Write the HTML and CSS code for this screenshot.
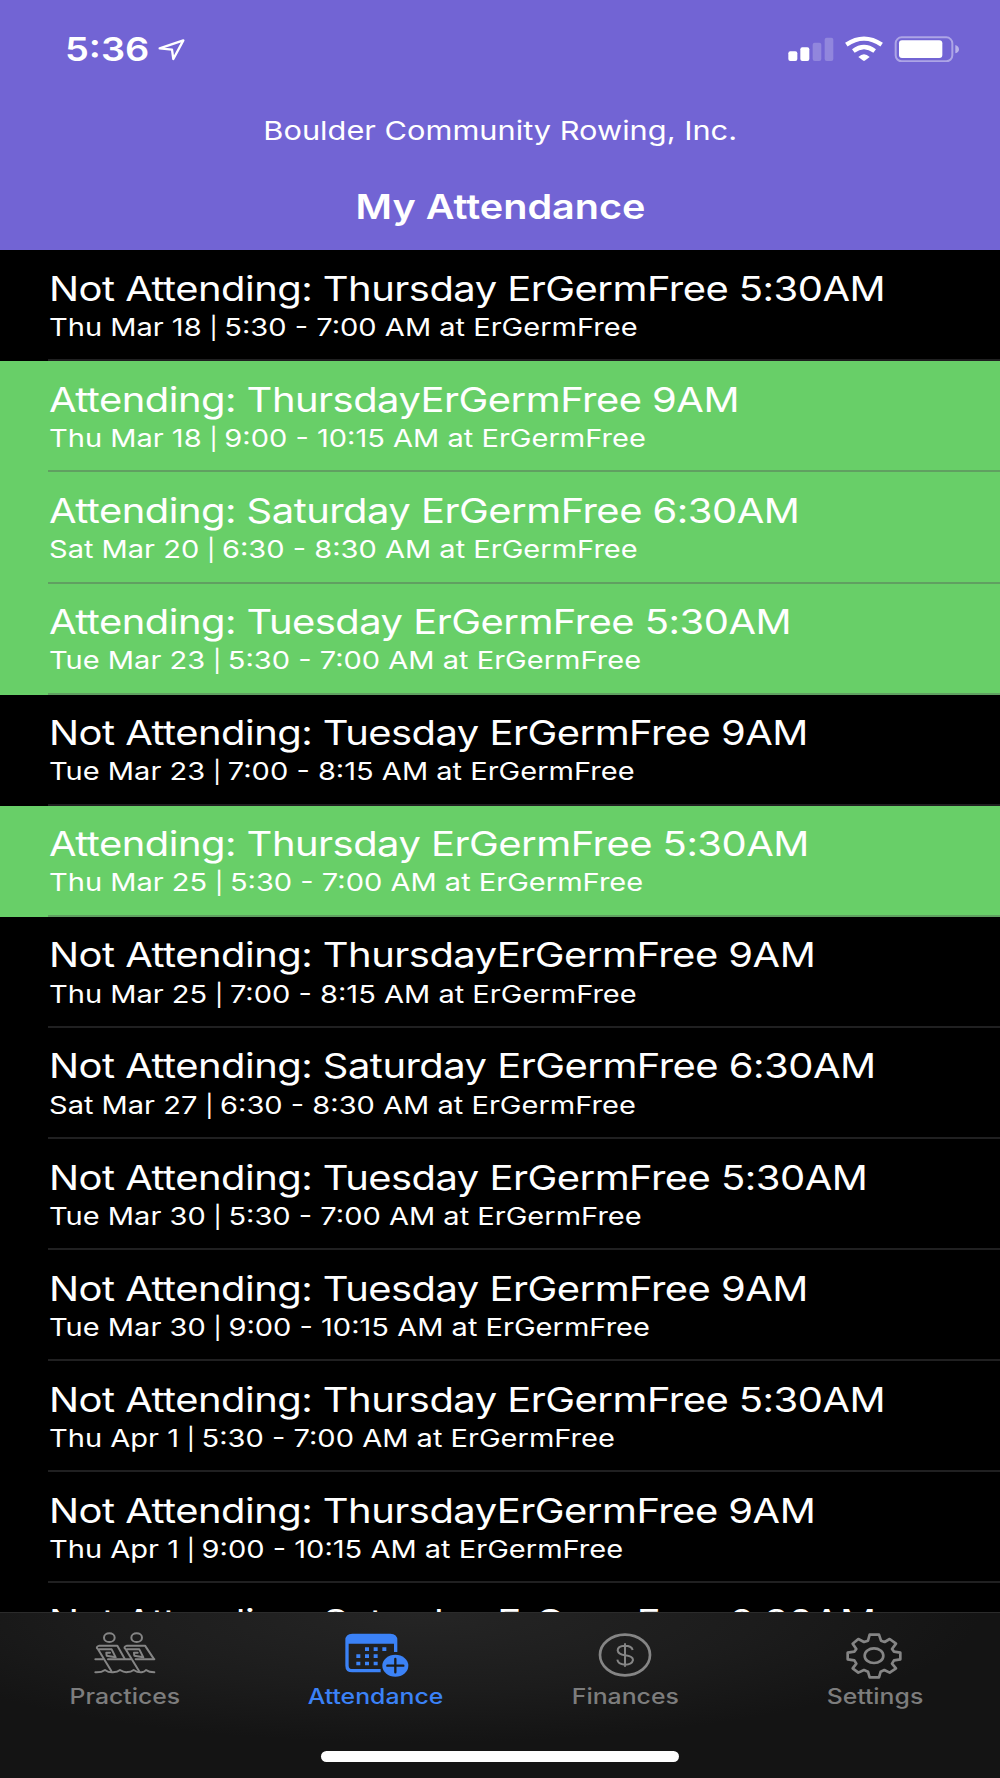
FILE: index.html
```html
<!doctype html>
<html>
<head>
<meta charset="UTF-8">
<title>My Attendance</title>
<link rel="stylesheet" href="styles.css">
</head>
<body>
	<div class="header">
		<div class="status">
			<div class="clock">
				<span class="time">5:36</span>
				<svg class="arrow" width="27" height="22" viewBox="473 117 81 66"><path d="M478 145L549 121L519 177L515 149Z" fill="none" stroke="#fff" stroke-width="7" stroke-linejoin="round"/></svg>
			</div>
			<svg class="signals" width="172" height="26" viewBox="864 108 516 78">
				<g fill="#fff">
					<rect x="865" y="154" width="27" height="29" rx="6"/>
					<rect x="901" y="142" width="27" height="41" rx="6"/>
					<rect x="938" y="128" width="26" height="55" rx="6" opacity=".22"/>
					<rect x="974" y="113" width="26" height="70" rx="6" opacity=".22"/>
					<path d="M1075 171Q1092 155 1109 171L1096 181Q1092 184 1088 181Z"/>
					<rect x="1197" y="121" width="130" height="53" rx="9"/>
					<path d="M1366 135Q1377 139 1377 148T1366 160Z" opacity=".5"/>
				</g>
				<path d="M1039 134Q1092 98 1145 134M1060 153Q1092 129 1124 153" fill="none" stroke="#fff" stroke-width="13"/>
				<rect x="1187" y="112" width="170" height="72" rx="18" fill="none" stroke="#fff" stroke-width="6" opacity=".42"/>
			</svg>
		</div>
		<p class="club"><span>Boulder Community Rowing, Inc.</span></p>
		<h1><span>My Attendance</span></h1>
	</div>
	<ul class="list">
		<li><div class="cell"><strong>Not Attending: Thursday ErGermFree 5:30AM</strong><em>Thu Mar 18 <i>|</i> 5:30 - 7:00 AM at ErGermFree</em></div></li>
		<li class="on"><div class="cell"><strong>Attending: ThursdayErGermFree 9AM</strong><em>Thu Mar 18 <i>|</i> 9:00 - 10:15 AM at ErGermFree</em></div></li>
		<li class="on"><div class="cell"><strong>Attending: Saturday ErGermFree 6:30AM</strong><em>Sat Mar 20 <i>|</i> 6:30 - 8:30 AM at ErGermFree</em></div></li>
		<li class="on"><div class="cell"><strong>Attending: Tuesday ErGermFree 5:30AM</strong><em>Tue Mar 23 <i>|</i> 5:30 - 7:00 AM at ErGermFree</em></div></li>
		<li><div class="cell"><strong>Not Attending: Tuesday ErGermFree 9AM</strong><em>Tue Mar 23 <i>|</i> 7:00 - 8:15 AM at ErGermFree</em></div></li>
		<li class="on"><div class="cell"><strong>Attending: Thursday ErGermFree 5:30AM</strong><em>Thu Mar 25 <i>|</i> 5:30 - 7:00 AM at ErGermFree</em></div></li>
		<li><div class="cell"><strong>Not Attending: ThursdayErGermFree 9AM</strong><em>Thu Mar 25 <i>|</i> 7:00 - 8:15 AM at ErGermFree</em></div></li>
		<li><div class="cell"><strong>Not Attending: Saturday ErGermFree 6:30AM</strong><em>Sat Mar 27 <i>|</i> 6:30 - 8:30 AM at ErGermFree</em></div></li>
		<li><div class="cell"><strong>Not Attending: Tuesday ErGermFree 5:30AM</strong><em>Tue Mar 30 <i>|</i> 5:30 - 7:00 AM at ErGermFree</em></div></li>
		<li><div class="cell"><strong>Not Attending: Tuesday ErGermFree 9AM</strong><em>Tue Mar 30 <i>|</i> 9:00 - 10:15 AM at ErGermFree</em></div></li>
		<li><div class="cell"><strong>Not Attending: Thursday ErGermFree 5:30AM</strong><em>Thu Apr 1 <i>|</i> 5:30 - 7:00 AM at ErGermFree</em></div></li>
		<li><div class="cell"><strong>Not Attending: ThursdayErGermFree 9AM</strong><em>Thu Apr 1 <i>|</i> 9:00 - 10:15 AM at ErGermFree</em></div></li>
		<li><div class="cell"><strong>Not Attending: Saturday ErGermFree 6:30AM</strong></div></li>
	</ul>
	<div class="tabbar">
		<ul class="tabs">
			<li>
				<svg width="64" height="48" viewBox="278 184 192 144" fill="none" stroke="#858585" stroke-width="6" stroke-linejoin="round" stroke-linecap="round">
					<ellipse cx="327" cy="204" rx="16" ry="13"/>
					<ellipse cx="409" cy="204" rx="16" ry="13"/>
					<path d="M373 267L351 228H297Q284 232 293 239L333 304M297 239H334L346 263L319 258L318 249H329"/>
					<path d="M460 267L434 228H380Q367 232 376 239L416 304M380 239H417L429 263L402 258L401 249H412"/>
					<path d="M285 269H308M323 269H391M406 269H462"/>
					<path d="M285 308Q303 309 314 301Q325 309 338 308Q352 307 359 301Q372 309 382 307Q391 307 400 301Q412 309 424 308Q433 306 437 301Q446 308 462 308"/>
				</svg>
				<span>Practices</span>
			</li>
			<li class="cur">
				<svg width="68" height="48" viewBox="1026 184 204 144">
					<path d="M1145 303H1060Q1044 303 1044 288V212Q1044 197 1060 197H1174Q1190 197 1190 212V247" fill="none" stroke="#3b82f7" stroke-width="10"/>
					<path d="M1044 222V210Q1046 196 1060 196H1174Q1190 198 1190 222Z" fill="#3b82f7"/>
					<path d="M1104 233V244M1130 233V244M1156 233V244M1078 254V265M1104 254V265M1130 254V265M1078 276V287M1104 276V287M1130 276V287" stroke="#3b82f7" stroke-width="12"/>
					<ellipse cx="1189" cy="288" rx="39" ry="33" fill="#3b82f7"/>
					<path d="M1165 288H1213M1189 268V308" stroke="#1b1b1b" stroke-width="7" stroke-linecap="round"/>
				</svg>
				<span>Attendance</span>
			</li>
			<li>
				<svg width="64" height="48" viewBox="279 184 192 144" fill="none" stroke="#858585">
					<ellipse cx="375" cy="256" rx="75" ry="61" stroke-width="8"/>
					<path d="M398 241Q395 228 375 228Q353 229 353 242Q354 253 375 257Q399 260 399 271Q396 285 375 285Q354 284 352 270M375 221V291" stroke-width="6"/>
				</svg>
				<span>Finances</span>
			</li>
			<li>
				<svg width="64" height="48" viewBox="1028 184 192 144" fill="none" stroke="#858585" stroke-width="8" stroke-linejoin="round">
					<path d="M1108 195H1136L1142 213L1153 217L1168 208L1187 222L1175 238L1181 246L1200 249V269L1181 272L1175 282L1187 296L1168 309L1152 301L1141 306L1136 323H1108L1103 306L1091 301L1074 309L1057 296L1068 282L1062 272L1042 269V249L1062 246L1068 238L1057 222L1074 208L1091 217L1103 213Z"/>
					<ellipse cx="1121" cy="258" rx="28" ry="22"/>
				</svg>
				<span>Settings</span>
			</li>
		</ul>
		<div class="home"></div>
	</div>
</body>
</html>
```
FILE: styles.css
```css
*{margin:0;padding:0;box-sizing:border-box;}
body{width:1000px;height:1778px;overflow:hidden;background:#000;color:#fff;font-family:Inter,"Liberation Sans",sans-serif;display:flex;flex-direction:column;}
ul,li{list-style:none;}
svg{display:block;}
/*header start*/
.header{height:250.3px;flex:none;background:#7264d4;text-align:center;}
.status{height:99px;padding:0 40px 0 65px;display:flex;justify-content:space-between;}
.clock{display:flex;}
.time{width:93px;margin-top:29px;font-size:33px;line-height:40px;font-weight:600;text-align:left;white-space:nowrap;transform:scaleX(1.15);transform-origin:left;}
.arrow{margin-top:39px;}
.signals{margin-top:36px;}
.club{height:62px;padding-top:14.5px;font-size:26px;line-height:34px;}
.club span{display:inline-block;transform:scaleX(1.183);}
h1{height:89px;padding:25px 0 0 2px;font-size:34px;line-height:42px;font-weight:600;}
h1 span{display:inline-block;transform:scaleX(1.164);}
/*header end*/
/*list start*/
.list{height:1362.2px;flex:none;overflow:hidden;}
.list li{height:111.1px;padding-left:48px;}
.list li.on{background:#68cf68;}
.cell{height:100%;padding-top:16.5px;border-bottom:2px solid rgba(84,84,88,.38);}
.cell strong,.cell em{display:block;width:760px;font-style:normal;font-weight:400;white-space:nowrap;transform-origin:left;}
.cell strong{margin-left:1px;font-size:34px;line-height:44px;letter-spacing:-.45px;transform:scaleX(1.175);}
.cell em{margin-top:.2px;margin-left:.5px;font-size:24.5px;line-height:32px;transform:scaleX(1.185);}
.cell i{margin:0 -1.5px 0 -.5px;font-size:22px;font-style:normal;}
/*list end*/
/*tabbar start*/
.tabbar{flex:1;border-top:1px solid #2b2b2b;background:radial-gradient(ellipse 560px 130px at 42% 0,#252525 0,#1c1c1c 60%,#141414 100%);}
.tabs{height:138px;padding-top:18px;display:flex;}
.tabs li{width:250px;display:flex;flex-direction:column;align-items:center;color:#7d7d7d;}
.tabs span{margin-top:4.5px;font-size:21px;line-height:26px;font-weight:500;transform:scaleX(1.18);}
.tabs li.cur{color:#3b82f7;}
.home{width:358px;height:11px;margin:0 auto;border-radius:6px;background:#fff;}
/*tabbar end*/
```
